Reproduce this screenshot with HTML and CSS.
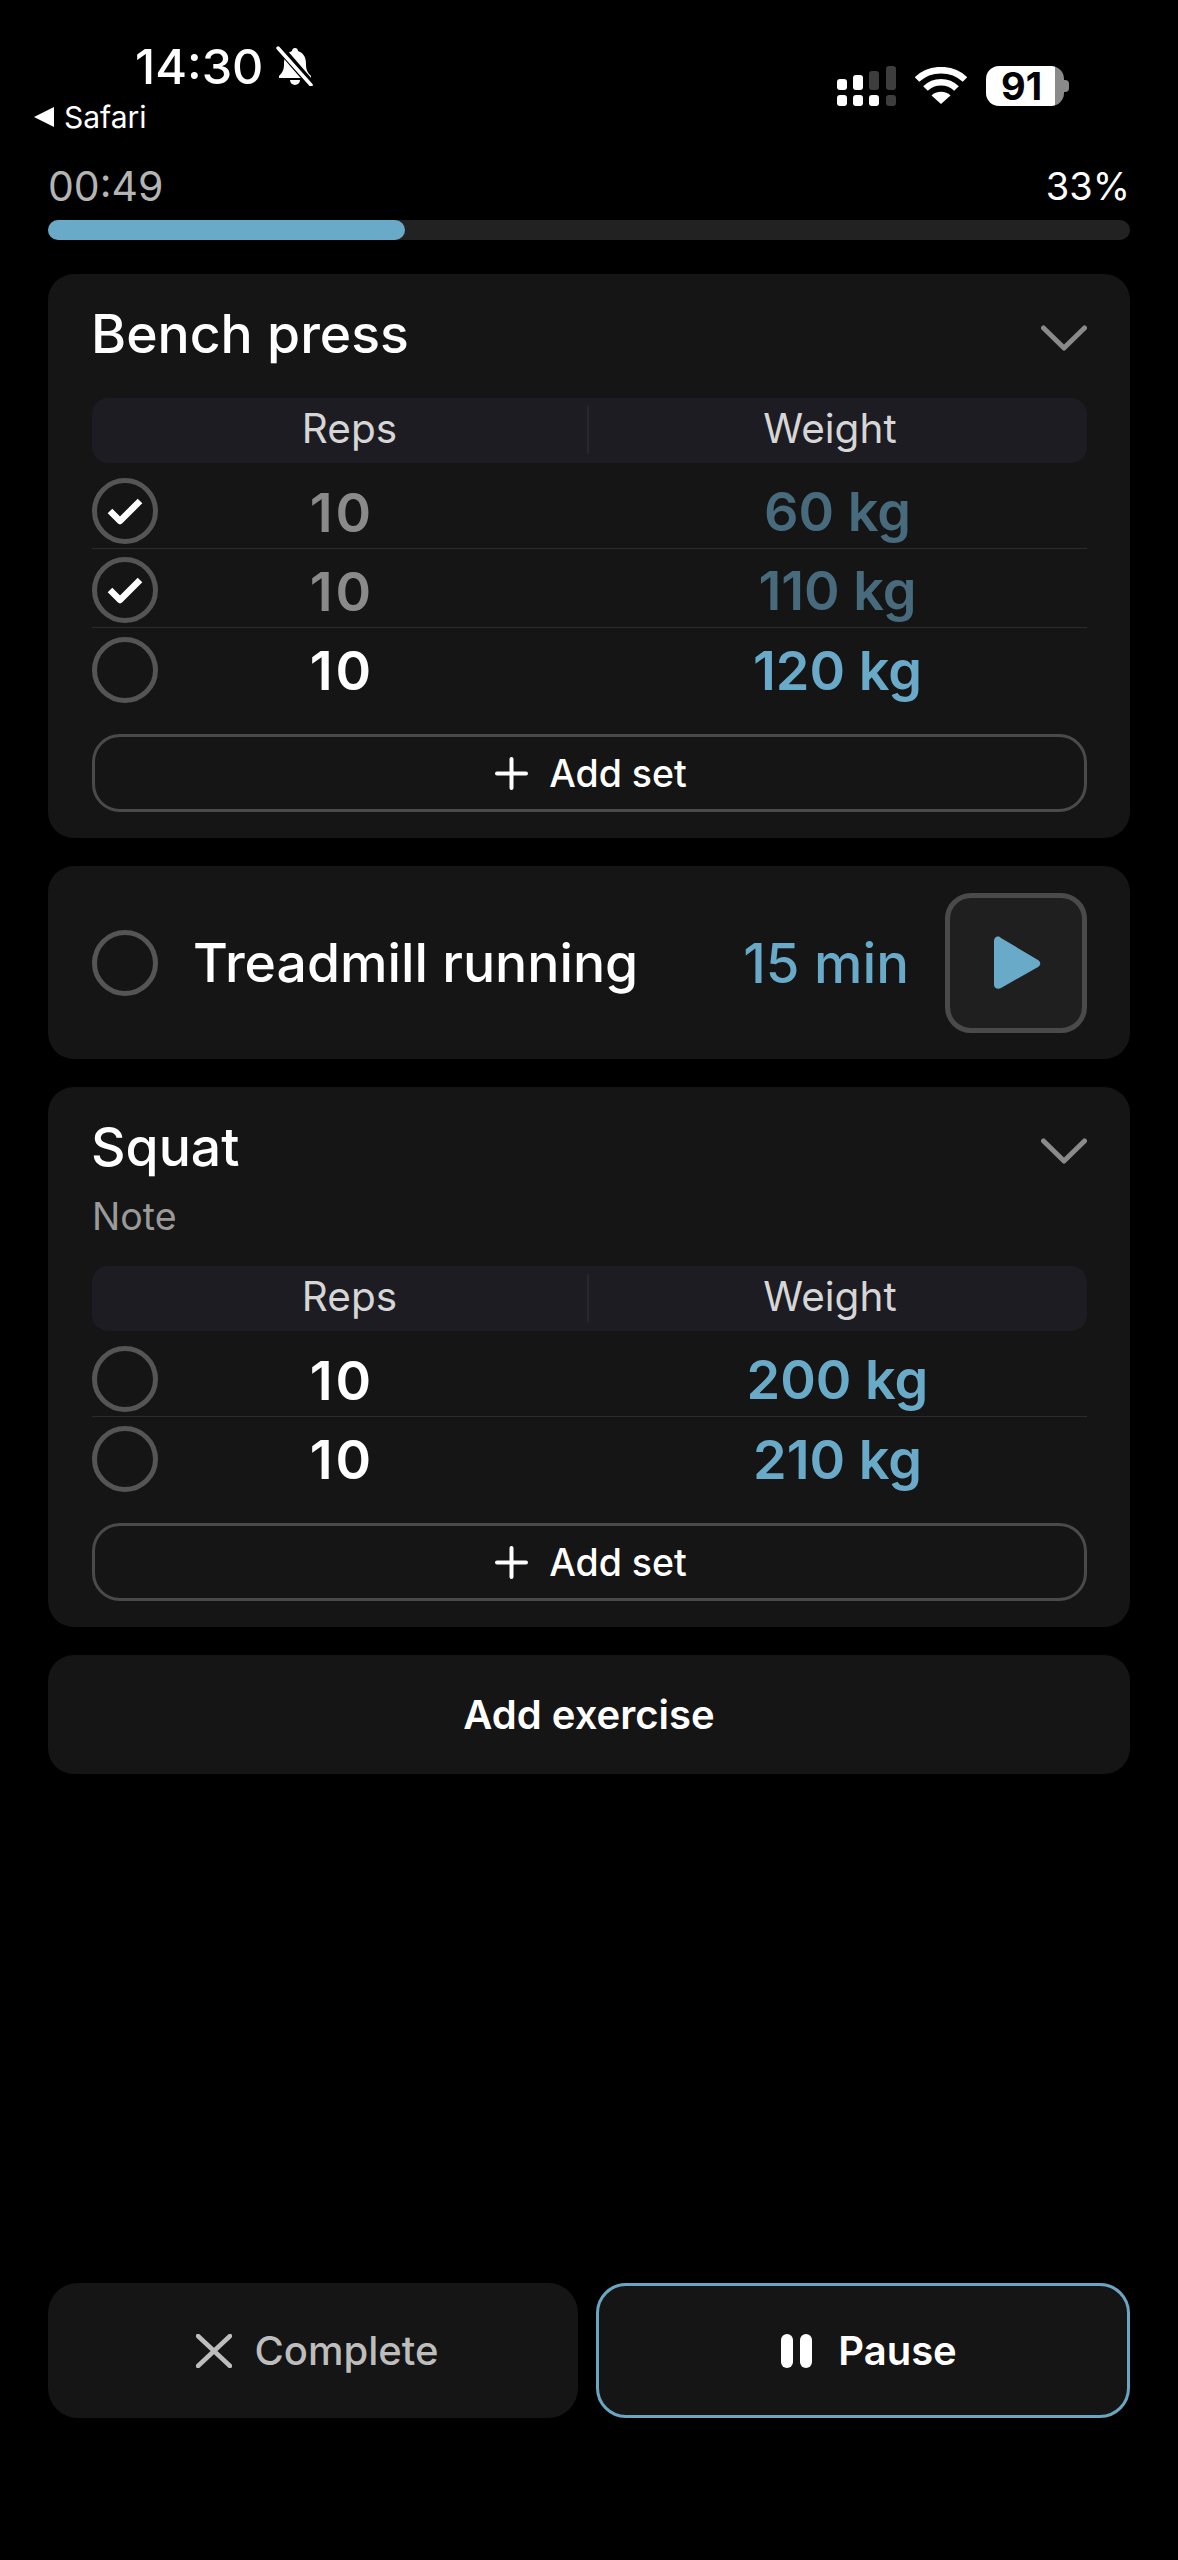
FILE: index.html
```html
<!DOCTYPE html>
<html lang="en">
<head>
  <meta charset="UTF-8">
  <title>Workout</title>
  <link rel="stylesheet" href="styles.css">
</head>
<body>

<div class="page">

  <div class="status">
    <div class="status-left">
      <div class="clock">
        <span>14:30</span>
        <svg class="bell" viewBox="0 0 38 40">
          <path fill="#fff" d="M19 2c-2 0-3 1.500-3 3C10 7 8 12 8 18c0 5-1 8-5 12v2h32v-2c-4-4-5-7-5-12 0-6-2-11-8-13 0-1.500-1-3-3-3z"/>
          <path fill="#fff" d="M14 34h10a5 5 0 0 1-10 0z"/>
          <path stroke="#000" stroke-width="8" d="M3 1l33 38"/>
          <path stroke="#fff" stroke-width="3.500" stroke-linecap="round" d="M2 2l33 37"/>
        </svg>
      </div>
      <div class="back"><i class="back-arrow"></i>Safari</div>
    </div>
    <div class="status-right">
      <svg class="signal" viewBox="0 0 59 40">
        <rect x="0" y="13" width="10" height="11" rx="3" fill="#fff"/>
        <rect x="16" y="9" width="10" height="15" rx="3" fill="#fff"/>
        <rect x="32" y="5" width="10" height="19" rx="3" fill="#3d3d3d"/>
        <rect x="49" y="0" width="10" height="24" rx="3" fill="#3d3d3d"/>
        <rect x="0" y="29" width="10" height="11" rx="3" fill="#fff"/>
        <rect x="16" y="29" width="10" height="11" rx="3" fill="#fff"/>
        <rect x="32" y="29" width="10" height="11" rx="3" fill="#fff"/>
        <rect x="49" y="29" width="10" height="11" rx="3" fill="#3d3d3d"/>
      </svg>
      <svg class="wifi" viewBox="0 0 52 37">
        <path fill="none" stroke="#fff" stroke-width="6.500" d="M2 12.500C15 0 37 0 50 12.500"/>
        <path fill="none" stroke="#fff" stroke-width="6.500" d="M10.500 21.500C19 13 33 13 41.500 21.500"/>
        <path fill="#fff" d="M16.500 28.500C21 23.500 31 23.500 35.500 28.500L26 37z"/>
      </svg>
      <div class="battery">
        <div class="battery-body">91</div>
        <div class="battery-nub"></div>
      </div>
    </div>
  </div>

  <div class="main">
    <div class="progress-labels">
      <span class="elapsed">00:49</span>
      <span class="percent">33%</span>
    </div>
    <div class="track"><div class="fill" style="width: 33%"></div></div>

    <div class="card exercise">
      <div class="title-row">
        <span class="title">Bench press</span>
        <svg class="chevron" viewBox="0 0 46 26"><path d="M2.500 3L23 23 43.500 3"/></svg>
      </div>
      <div class="table-head">
        <div class="head-reps">Reps</div>
        <div class="head-weight">Weight</div>
      </div>
      <div class="set-row done">
        <div class="circle"><svg class="check" viewBox="0 0 36 27"><path d="M3 13l10 10L33 3"/></svg></div>
        <div class="reps">10</div>
        <div class="weight">60 kg</div>
      </div>
      <div class="set-row done">
        <div class="circle"><svg class="check" viewBox="0 0 36 27"><path d="M3 13l10 10L33 3"/></svg></div>
        <div class="reps">10</div>
        <div class="weight">110 kg</div>
      </div>
      <div class="set-row last">
        <div class="circle"></div>
        <div class="reps">10</div>
        <div class="weight">120 kg</div>
      </div>
      <div class="add-set">
        <svg class="plus" viewBox="0 0 33 33"><path d="M16.500 2v29M2 16.500h29"/></svg>
        Add set
      </div>
    </div>

    <div class="card cardio">
      <div class="circle"></div>
      <span class="title cardio-name">Treadmill running</span>
      <span class="duration">15 min</span>
      <div class="play">
        <svg class="play-icon" viewBox="0 0 47 54"><path d="M0 5c0-4 4-6 7-3l37 22c3 2 3 5 0 7L7 52c-3 2-7 0-7-3z"/></svg>
      </div>
    </div>

    <div class="card exercise">
      <div class="title-row">
        <span class="title">Squat</span>
        <svg class="chevron" viewBox="0 0 46 26"><path d="M2.500 3L23 23 43.500 3"/></svg>
      </div>
      <div class="note">Note</div>
      <div class="table-head">
        <div class="head-reps">Reps</div>
        <div class="head-weight">Weight</div>
      </div>
      <div class="set-row">
        <div class="circle"></div>
        <div class="reps">10</div>
        <div class="weight">200 kg</div>
      </div>
      <div class="set-row last">
        <div class="circle"></div>
        <div class="reps">10</div>
        <div class="weight">210 kg</div>
      </div>
      <div class="add-set">
        <svg class="plus" viewBox="0 0 33 33"><path d="M16.500 2v29M2 16.500h29"/></svg>
        Add set
      </div>
    </div>

    <div class="card add-exercise">Add exercise</div>
  </div>

  <div class="footer">
    <div class="btn btn-complete">
      <svg class="x-icon" viewBox="0 0 36 34"><path d="M2 2l32 30M34 2L2 32"/></svg>
      Complete
    </div>
    <div class="btn btn-pause">
      <span class="pause-icon"><i></i><i></i></span>
      Pause
    </div>
  </div>

</div>

</body>
</html>
```

FILE: styles.css
```css
* { box-sizing: border-box; }
body { margin: 0; background: #000; color: #fff; font-family: Inter, "Liberation Sans", sans-serif; }
.page { display: flex; flex-direction: column; min-height: 100vh; padding-bottom: 142px; }

/* status bar */
.status { display: flex; justify-content: space-between; height: 166px; padding: 42px 109px 0 34px; }
.clock { display: flex; align-items: center; gap: 13px; margin-left: 101px; height: 48px; font-size: 48.5px; font-weight: 500; }
.bell { width: 38px; height: 40px; }
.back { display: flex; align-items: center; gap: 10px; margin-top: 11px; height: 32px; font-size: 30px; }
.back-arrow { width: 0; height: 0; border-style: solid; border-width: 10px 20px 10px 0; border-color: transparent #fff transparent transparent; }
.status-right { display: flex; align-items: flex-start; gap: 19px; padding-top: 24px; }
.signal { width: 59px; height: 40px; }
.wifi { width: 52px; height: 37px; margin-top: 1px; }
.battery { display: flex; align-items: center; }
.battery-body { width: 78px; height: 40px; padding-right: 7px; border-radius: 13px; background: linear-gradient(to right, #fff 88%, #8a8a8a 88%); color: #000; font-size: 38px; font-weight: 700; line-height: 40px; text-align: center; }
.battery-nub { width: 5px; height: 12px; border-radius: 0 4px 4px 0; background: #8a8a8a; }

/* progress */
.main { padding: 0 48px; }
.progress-labels { display: flex; justify-content: space-between; height: 40px; margin-bottom: 14px; line-height: 40px; }
.elapsed { color: #b4b4b4; font-size: 41px; }
.percent { font-size: 38px; }
.track { height: 20px; border-radius: 10px; background: #222; }
.fill { height: 100%; border-radius: 10px; background: #6aaac9; }

/* cards */
.card { margin-top: 28px; border-radius: 26px; background: #151515; }
.track + .card { margin-top: 34px; }
.exercise { padding: 30px 43px 26px 44px; }
.title-row { display: flex; justify-content: space-between; align-items: center; height: 60px; }
.title { margin-left: -1px; font-size: 53.5px; font-weight: 500; line-height: 60px; }
.chevron { width: 46px; height: 26px; margin-top: 8px; fill: none; stroke: #8a8a8a; stroke-width: 5; stroke-linecap: round; stroke-linejoin: round; }
.note { margin-top: 25px; height: 30px; color: #9a9a9a; font-size: 37.5px; line-height: 30px; }
.table-head { display: flex; height: 65px; margin-top: 34px; border-radius: 16px; background: #1c1c22; color: #d6d6d6; font-size: 40.5px; line-height: 62px; text-align: center; }
.head-reps { width: 495px; padding-left: 20px; }
.head-weight { flex: 1; padding-right: 14px; background: linear-gradient(#26262c, #26262c) left 8px / 2px 48px no-repeat; }

.set-row { display: flex; align-items: center; height: 79px; padding-top: 4px; border-bottom: 1px solid #2c2c2c; }
.table-head + .set-row { margin-top: 7px; }
.set-row.last { border-bottom: 0; }
.circle { display: flex; justify-content: center; align-items: center; flex: none; width: 66px; height: 66px; border: 5px solid #555; border-radius: 50%; }
.check { width: 36px; height: 27px; fill: none; stroke: #fff; stroke-width: 6.500; stroke-linejoin: round; }
.reps { width: 362px; padding: 2px 0 0 6px; font-size: 54px; font-weight: 600; letter-spacing: 3px; text-align: center; }
.weight { width: 500px; margin-left: auto; padding: 1px 0 0 1px; color: #6aaac9; font-size: 54px; font-weight: 600; text-align: center; }
.done .reps { color: #8a8a8a; }
.done .weight { color: #476a7c; }

.add-set { display: flex; justify-content: center; align-items: center; gap: 21px; height: 78px; margin-top: 27px; padding-left: 3px; border: 3px solid #4a4a4a; border-radius: 28px; font-size: 37.5px; font-weight: 500; }
.plus { width: 33px; height: 33px; fill: none; stroke: #fff; stroke-width: 4; stroke-linecap: round; }

.cardio { display: flex; align-items: center; padding: 27px 43px 26px 44px; }
.cardio-name { margin-left: 35px; }
.duration { margin-left: auto; color: #6aaac9; font-size: 54.5px; font-weight: 500; }
.play { display: flex; justify-content: center; align-items: center; width: 142px; height: 140px; margin-left: 36px; padding-left: 3px; border: 5px solid #4a4a4a; border-radius: 26px; background: #1f1f1f; }
.play-icon { width: 47px; height: 54px; fill: #6aaac9; }

.add-exercise { height: 119px; font-size: 40px; font-weight: 600; line-height: 119px; text-align: center; }

/* bottom buttons */
.footer { display: grid; grid-template-columns: 530px 1fr; gap: 18px; margin-top: auto; padding: 0 48px; }
.btn { display: flex; justify-content: center; align-items: center; height: 135px; border-radius: 30px; background: #151515; font-size: 40px; }
.btn-complete { gap: 22px; padding-left: 9px; color: #bdbdbd; font-weight: 500; }
.btn-pause { gap: 26px; padding-left: 12px; border: 3px solid #6aa6c2; font-weight: 600; }
.x-icon { width: 36px; height: 34px; fill: none; stroke: #bdbdbd; stroke-width: 4.500; stroke-linecap: round; }
.pause-icon { display: flex; gap: 7px; }
.pause-icon i { width: 12px; height: 34px; border-radius: 6px; background: #fff; }
```
